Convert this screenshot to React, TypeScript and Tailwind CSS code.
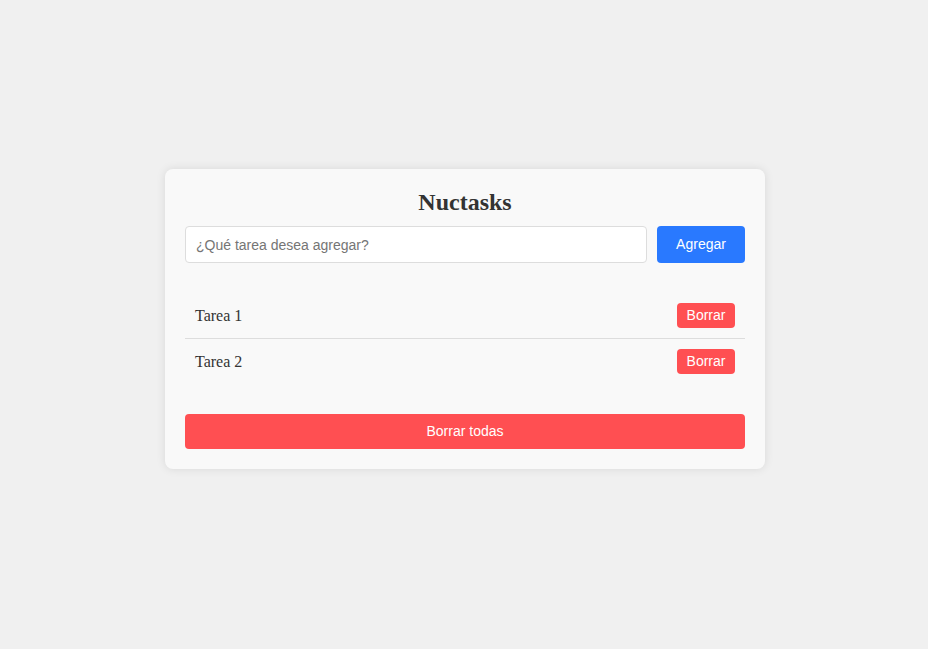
import React from "react";

export default function App() {
  const tasks = ["Tarea 1", "Tarea 2"];
  return (
    <div className="flex min-h-screen justify-center bg-[#f0f0f0] pl-[2px] pt-[169px] font-['Liberation_Serif',serif]">
      <div className="h-fit w-[600px] rounded-[8px] bg-[#f9f9f9] p-[20px] shadow-[0_0_10px_rgba(0,0,0,0.1)]">
        <h1 className="mb-[10px] text-center text-[24px] font-bold leading-[27px] text-[#333]">Nuctasks</h1>
        <div className="flex gap-[10px]">
          <input
            className="h-[37px] flex-1 rounded-[4px] border border-[#ddd] bg-white px-[10px] font-['Liberation_Sans',Arial,sans-serif] text-[14px] text-[#333] outline-none placeholder:text-[#757575]"
            placeholder="¿Qué tarea desea agregar?"
          />
          <button className="h-[37px] w-[88px] rounded-[4px] bg-[#2979ff] font-['Liberation_Sans',Arial,sans-serif] text-[14px] text-white">
            Agregar
          </button>
        </div>
        <ul className="mt-[30px]">
          {tasks.map((t, i) => (
            <li
              key={t}
              className={`flex items-center justify-between px-[10px] py-[10px] text-[16px] text-[#333] ${i < tasks.length - 1 ? "border-b border-[#ddd]" : ""}`}
            >
              <span>{t}</span>
              <button className="h-[25px] w-[58px] rounded-[4px] bg-[#ff4f52] font-['Liberation_Sans',Arial,sans-serif] text-[14px] text-white">
                Borrar
              </button>
            </li>
          ))}
        </ul>
        <button className="mt-[30px] h-[35px] w-full rounded-[4px] bg-[#ff4f52] font-['Liberation_Sans',Arial,sans-serif] text-[14px] text-white">
          Borrar todas
        </button>
      </div>
    </div>
  );
}
